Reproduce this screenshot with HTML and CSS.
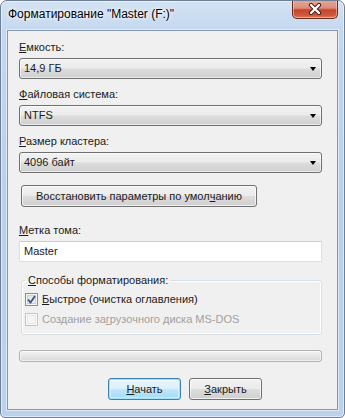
FILE: index.html
```html
<!DOCTYPE html>
<html lang="ru">
<head>
<meta charset="utf-8">
<title>Форматирование</title>
<link rel="stylesheet" href="styles.css">
</head>
<body>
<div class="window">
  <div class="titlebar">
    <span class="title">Форматирование "Master (F:)"</span>
    <div class="close">
      <svg width="14" height="12" viewBox="0 0 14 12">
        <path d="M3 2 L11 10 M11 2 L3 10" stroke="#3b1a14" stroke-width="4.2" stroke-linecap="round"/>
        <path d="M3 2 L11 10 M11 2 L3 10" stroke="#ffffff" stroke-width="2.4" stroke-linecap="round"/>
      </svg>
    </div>
  </div>
  <div class="client">
    <div class="lbl"><u>Е</u>мкость:</div>
    <div class="combo"><span>14,9 ГБ</span><span class="arrow"></span></div>
    <div class="lbl next"><u>Ф</u>айловая система:</div>
    <div class="combo"><span>NTFS</span><span class="arrow"></span></div>
    <div class="lbl next"><u>Р</u>азмер кластера:</div>
    <div class="combo"><span>4096 байт</span><span class="arrow"></span></div>
    <div class="btn restore">Восстановить параметры по умол<u>ч</u>анию</div>
    <div class="lbl vol"><u>М</u>етка тома:</div>
    <div class="input">Master</div>
    <fieldset class="group">
      <legend><u>С</u>пособы форматирования:</legend>
      <div class="check-row">
        <span class="cb checked">
          <svg width="9" height="9" viewBox="0 0 9 9"><path d="M1 4.5 L3.5 7.5 L8 1" fill="none" stroke="#3b4f8e" stroke-width="1.8"/></svg>
        </span>
        <span><u>Б</u>ыстрое (очистка оглавления)</span>
      </div>
      <div class="check-row disabled">
        <span class="cb"></span>
        <span>Создание за<u>г</u>рузочного диска MS-DOS</span>
      </div>
    </fieldset>
    <div class="progress"></div>
    <div class="buttons">
      <div class="btn action default"><u>Н</u>ачать</div>
      <div class="btn action"><u>З</u>акрыть</div>
    </div>
  </div>
</div>
</body>
</html>
```
FILE: styles.css
```css
html, body {
  margin: 0;
  padding: 0;
  background: #ffffff;
}
body {
  font-family: "Liberation Sans", Arial, sans-serif;
  font-size: 11px;
  color: #1a1a1a;
}
u { text-decoration: underline; text-underline-offset: 1px; }

.window {
  width: 345px;
  height: 418px;
  box-sizing: border-box;
  border: 1px solid #6d7f96;
  border-radius: 7px 7px 5px 5px;
  background: linear-gradient(180deg, #d3e2f3 0%, #c3d7ee 8%, #b9d0ea 50%, #bcd2eb 100%);
  box-shadow: inset 0 0 0 1px rgba(255,255,255,0.55);
  display: flex;
  flex-direction: column;
  overflow: hidden;
}

.titlebar {
  height: 29px;
  display: flex;
  align-items: flex-start;
  flex-shrink: 0;
}
.title {
  padding: 6px 0 0 7px;
  line-height: 15px;
  font-size: 12px;
  color: #000;
  text-shadow: 0 0 6px #ffffff, 0 0 3px #ffffff;
  white-space: nowrap;
}
.close {
  margin-left: auto;
  margin-right: 6px;
  margin-top: -1px;
  width: 46px;
  height: 19px;
  box-sizing: border-box;
  border: 1px solid #6b2b20;
  border-top: none;
  border-radius: 0 0 5px 5px;
  background: linear-gradient(180deg, #e9a99a 0%, #dc8c78 45%, #c5442c 55%, #cf5a3c 85%, #e07a55 100%);
  box-shadow: inset 0 0 0 1px rgba(255,220,210,0.5);
  display: flex;
  align-items: center;
  justify-content: center;
}

.client {
  flex: 1;
  margin: 0 6px 7px 6px;
  border: 1px solid #8497ae;
  background: #f0f0f0;
  padding: 9px 15px 0 11px;
  display: flex;
  flex-direction: column;
  align-items: flex-start;
  box-shadow: 0 0 0 1px rgba(255,255,255,0.5);
}

.lbl {
  line-height: 15px;
  height: 15px;
  margin-bottom: 3px;
  white-space: nowrap;
}
.lbl.next { margin-top: 8px; }
.lbl.vol { margin-top: 16px; }

.combo {
  width: 303px;
  height: 21px;
  box-sizing: border-box;
  border: 1px solid #707070;
  border-radius: 3px;
  background: linear-gradient(180deg, #f2f2f2 0%, #ebebeb 48%, #dddddd 52%, #cfcfcf 100%);
  box-shadow: inset 0 0 0 1px rgba(255,255,255,0.6);
  display: flex;
  align-items: center;
  padding-left: 4px;
  line-height: 15px;
}
.combo .arrow {
  margin-left: auto;
  margin-right: 5px;
  width: 0;
  height: 0;
  border-left: 3.5px solid transparent;
  border-right: 3.5px solid transparent;
  border-top: 4px solid #000;
}

.btn {
  box-sizing: border-box;
  height: 22px;
  border: 1px solid #707070;
  border-radius: 3px;
  background: linear-gradient(180deg, #f2f2f2 0%, #ebebeb 48%, #dddddd 52%, #cfcfcf 100%);
  box-shadow: inset 0 0 0 1px rgba(255,255,255,0.7);
  display: flex;
  align-items: center;
  justify-content: center;
  line-height: 15px;
  white-space: nowrap;
}
.btn.restore {
  margin-top: 12px;
  margin-left: 2px;
  width: 236px;
}

.input {
  width: 303px;
  height: 21px;
  box-sizing: border-box;
  background: #ffffff;
  border: 1px solid #dcdfe6;
  border-top-color: #c9ccd4;
  padding-left: 4px;
  display: flex;
  align-items: center;
  line-height: 15px;
}

.group {
  margin: 11px 0 0 2px;
  width: 301px;
  box-sizing: border-box;
  border: 1px solid #d5dfe5;
  border-radius: 3px;
  padding: 1px 3px 5px 3px;
  box-shadow: inset 0 0 0 1px #ffffff;
}
.group legend {
  padding: 0 3px;
  line-height: 15px;
  margin-left: 0;
}
.check-row {
  height: 20px;
  display: flex;
  align-items: center;
  gap: 4px;
  line-height: 15px;
  white-space: nowrap;
}
.check-row.disabled { color: #a0a0a0; }
.cb {
  width: 13px;
  height: 13px;
  box-sizing: border-box;
  border: 1px solid #8f8f8f;
  background: linear-gradient(135deg, #dcdcdc 0%, #f7f7f7 100%);
  box-shadow: inset 0 0 0 1px #f4f4f4, inset 0 0 0 2px #c9d0da;
  display: flex;
  align-items: center;
  justify-content: center;
  flex-shrink: 0;
}
.check-row.disabled .cb {
  border-color: #c5c5c5;
  background: #f4f4f4;
  box-shadow: inset 0 0 0 1px #fbfbfb, inset 0 0 0 2px #e6e6e6;
}

.progress {
  margin-top: 15px;
  width: 303px;
  height: 12px;
  box-sizing: border-box;
  border: 1px solid #b2b2b2;
  border-radius: 3px;
  background: linear-gradient(180deg, #f3f3f3 0%, #e6e6e6 50%, #dadada 100%);
  box-shadow: inset 0 0 0 1px rgba(255,255,255,0.6);
}

.buttons {
  margin-top: 16px;
  margin-left: 89px;
  display: flex;
  gap: 8px;
}
.btn.action {
  width: 73px;
  height: 22px;
}
.btn.default {
  border-color: #3c7fb1;
  background: linear-gradient(180deg, #eaf6fd 0%, #d9f0fc 48%, #bee6fd 52%, #a7d9f5 100%);
  box-shadow: inset 0 0 0 1px #9fe2f8, inset 0 0 0 2px rgba(255,255,255,0.4);
}
```
